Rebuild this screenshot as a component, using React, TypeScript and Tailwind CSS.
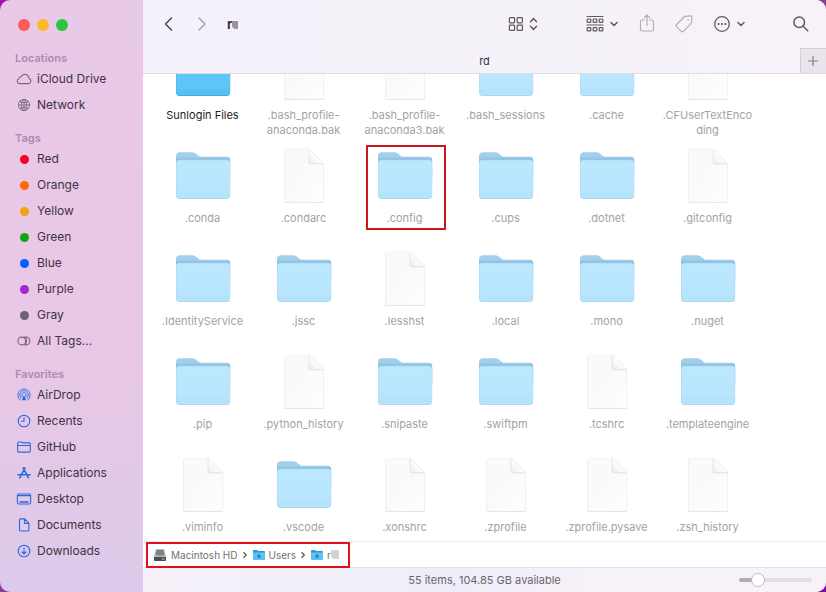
import { useId, type ReactNode } from "react";

type EntryKind = "folder" | "file";

interface Entry {
  name: string;
  kind: EntryKind;
  visible?: boolean;
  marked?: boolean;
}

const entries: Entry[] = [
  { name: "Sunlogin Files", kind: "folder", visible: true },
  { name: ".bash_profile-anaconda.bak", kind: "file" },
  { name: ".bash_profile-anaconda3.bak", kind: "file" },
  { name: ".bash_sessions", kind: "folder" },
  { name: ".cache", kind: "folder" },
  { name: ".CFUserTextEncoding", kind: "file" },
  { name: ".conda", kind: "folder" },
  { name: ".condarc", kind: "file" },
  { name: ".config", kind: "folder", marked: true },
  { name: ".cups", kind: "folder" },
  { name: ".dotnet", kind: "folder" },
  { name: ".gitconfig", kind: "file" },
  { name: ".IdentityService", kind: "folder" },
  { name: ".jssc", kind: "folder" },
  { name: ".lesshst", kind: "file" },
  { name: ".local", kind: "folder" },
  { name: ".mono", kind: "folder" },
  { name: ".nuget", kind: "folder" },
  { name: ".pip", kind: "folder" },
  { name: ".python_history", kind: "file" },
  { name: ".snipaste", kind: "folder" },
  { name: ".swiftpm", kind: "folder" },
  { name: ".tcshrc", kind: "file" },
  { name: ".templateengine", kind: "folder" },
  { name: ".viminfo", kind: "file" },
  { name: ".vscode", kind: "folder" },
  { name: ".xonshrc", kind: "file" },
  { name: ".zprofile", kind: "file" },
  { name: ".zprofile.pysave", kind: "file" },
  { name: ".zsh_history", kind: "file" },
];

function FolderIcon({ visible }: { visible?: boolean }) {
  const id = useId();
  const back = visible ? "#3f9fd8" : "#a2cfeb";
  const shade = visible ? "#358fc6" : "#8cbfe0";
  const top = visible ? "#66cafa" : "#bce8ff";
  const bottom = visible ? "#5bc3f6" : "#b7e5fd";
  const edge = visible ? "#3c9fd0" : "#a5d1e9";
  return (
    <svg viewBox="0 0 56 56" className="size-14" aria-hidden="true">
      <defs>
        <linearGradient id={id} x1="0" y1="0" x2="0" y2="1">
          <stop offset="0" stopColor={top} />
          <stop offset="1" stopColor={bottom} />
        </linearGradient>
        <linearGradient id={`${id}b`} x1="0" y1="4.500" x2="0" y2="12" gradientUnits="userSpaceOnUse">
          <stop offset=".5" stopColor={back} />
          <stop offset="1" stopColor={shade} />
        </linearGradient>
      </defs>
      <path d="M1 8.500c0-3 1.300-4.300 4.300-4.300h11.500c2 0 3.200.6 4.700 1.900l1.600 1.400c1.100.9 2 1.300 3.600 1.300H52c2.200 0 3.200 1.100 3.200 3.200V30H1z" fill={`url(#${id}b)`} />
      <path d="M1 15.500c0-2.600 1-3.700 3.500-3.700h47.200c2.500 0 3.500 1.100 3.500 3.700v31.500c0 2.900-1.100 4-4 4H5c-2.900 0-4-1.100-4-4z" fill={edge} />
      <path d="M1.300 15.700c0-2.400 1-3.400 3.200-3.400h47.200c2.200 0 3.200 1 3.200 3.400V46.600c0 2.600-1 3.600-3.600 3.600H4.900c-2.600 0-3.600-1-3.600-3.600z" fill={`url(#${id})`} />
      <path d="M1.500 45.500h53.200M1.700 47.500h52.800" stroke={edge} strokeWidth=".5" opacity=".45" />
    </svg>
  );
}

function FileIcon() {
  const id = useId();
  return (
    <svg viewBox="0 0 56 56" className="size-14" aria-hidden="true">
      <defs>
        <linearGradient id={id} x1="0" y1="0" x2="1" y2="1">
          <stop offset="0" stopColor="#fafafa" />
          <stop offset=".45" stopColor="#fafafa" />
          <stop offset="1" stopColor="#fefefe" />
        </linearGradient>
        <linearGradient id={`${id}f`} x1="0" y1="1" x2=".5" y2=".5">
          <stop offset="0" stopColor="#ececec" />
          <stop offset="1" stopColor="#fff" />
        </linearGradient>
      </defs>
      <path d="M9 2h24.400L48 16.500v37c0 1-.6 1.600-1.700 1.600H9.800c-1 0-1.600-.6-1.600-1.600V3z" fill="#e3e3e3" />
      <path d="M9.800 1h23.400L47.700 15.500v37.100c0 1-.5 1.500-1.500 1.500H10c-1 0-1.500-.5-1.500-1.500V2.500c0-1 .4-1.500 1.300-1.500z" fill={`url(#${id})`} stroke="#eeeeee" strokeWidth=".5" />
      <path d="M32.600 1.500V14.500c0 1.400.6 2 2 2h12.600z" fill="#ececec" />
      <path d="M33.200 1v12.500c0 1.400.6 2 2 2h12.500z" fill={`url(#${id}f)`} stroke="#dcdcdc" strokeWidth=".5" />
    </svg>
  );
}

function Glyph({ children, className = "" }: { children: ReactNode; className?: string }) {
  return (
    <svg
      viewBox="0 0 16 16"
      className={`size-4 shrink-0 ${className}`}
      fill="none"
      stroke="currentColor"
      strokeWidth="1.1"
      strokeLinecap="round"
      strokeLinejoin="round"
      aria-hidden="true"
    >
      {children}
    </svg>
  );
}

const gray = "text-[#7a677f]";
const blue = "text-[#2a68da]";

function Dot({ color }: { color: string }) {
  return (
    <span className="flex size-4 shrink-0 items-center justify-center">
      <span className={`size-[9px] rounded-full ${color}`} />
    </span>
  );
}

interface SideItem {
  label: string;
  icon: ReactNode;
}

const locations: SideItem[] = [
  {
    label: "iCloud Drive",
    icon: (
      <Glyph className={gray}>
        <path d="M3.600 12.600h8.800a2.600 2.600 0 0 0 .6-5.100A4.100 4.100 0 0 0 5.200 5.800 2.300 2.300 0 0 0 2.700 8 2.400 2.400 0 0 0 3.600 12.600z" />
      </Glyph>
    ),
  },
  {
    label: "Network",
    icon: (
      <Glyph className={gray}>
        <g strokeWidth=".9">
          <circle cx="8" cy="8" r="5.600" />
          <ellipse cx="8" cy="8" rx="2.600" ry="5.600" />
          <path d="M8 2.400v11.200M2.400 8h11.200M3.700 4.500c2.500 1.600 6.100 1.600 8.600 0M3.700 11.500c2.500-1.600 6.100-1.600 8.600 0" />
        </g>
      </Glyph>
    ),
  },
];

const tags: SideItem[] = [
  { label: "Red", icon: <Dot color="bg-[#fb0020]" /> },
  { label: "Orange", icon: <Dot color="bg-[#f96b00]" /> },
  { label: "Yellow", icon: <Dot color="bg-[#f0a30a]" /> },
  { label: "Green", icon: <Dot color="bg-[#0aa70f]" /> },
  { label: "Blue", icon: <Dot color="bg-[#0560fb]" /> },
  { label: "Purple", icon: <Dot color="bg-[#a528cf]" /> },
  { label: "Gray", icon: <Dot color="bg-[#726078]" /> },
  {
    label: "All Tags...",
    icon: (
      <Glyph className={gray}>
        <circle cx="5.800" cy="8" r="3.900" />
        <path d="M8.600 4.100h1.300a3.900 3.900 0 0 1 0 7.800H8.600c2.700-2 2.700-5.800 0-7.800" />
      </Glyph>
    ),
  },
];

const favorites: SideItem[] = [
  {
    label: "AirDrop",
    icon: (
      <Glyph className={blue}>
        <path d="M4 12.900a6.200 6.200 0 1 1 8 0M5 11.200a4.300 4.300 0 1 1 6 0M6.200 9.700a2.400 2.400 0 1 1 3.600 0" strokeWidth=".9" />
        <path d="M8 7.800l-2.200 5.400h4.400z" fill="currentColor" stroke="none" />
      </Glyph>
    ),
  },
  {
    label: "Recents",
    icon: (
      <Glyph className={blue}>
        <circle cx="8" cy="8" r="5.800" />
        <path d="M8 4.600V8.300H5.300" />
      </Glyph>
    ),
  },
  {
    label: "GitHub",
    icon: (
      <Glyph className={blue}>
        <path d="M1.700 12V4.200c0-.8.400-1.200 1.200-1.200h2.500c.8 0 1.100.9 1.900.9h5.800c.8 0 1.200.4 1.200 1.200V12c0 .7-.4 1.100-1.200 1.100H2.900c-.8 0-1.200-.4-1.200-1.100zM1.700 6.500h12.600" />
      </Glyph>
    ),
  },
  {
    label: "Applications",
    icon: (
      <Glyph className={blue}>
        <path d="M7.200 2.900L12.300 12.700M8.900 2.900L6 8.600M4.700 11.100L3.800 12.800M2 9.800h7.400M12 9.800h2" strokeWidth="1.600" />
      </Glyph>
    ),
  },
  {
    label: "Desktop",
    icon: (
      <Glyph className={blue}>
        <rect x="1.400" y="3" width="13.200" height="10" rx="1.200" />
        <path d="M1.400 4.600h13.200" />
        <path d="M4.200 11h7.600" strokeWidth="1.600" />
      </Glyph>
    ),
  },
  {
    label: "Documents",
    icon: (
      <Glyph className={blue}>
        <path d="M3.500 3c0-.7.400-1.100 1.100-1.100h4.100l4.200 4.300v6.700c0 .7-.4 1.100-1.100 1.100H4.600c-.7 0-1.100-.4-1.100-1.100zM8.500 2.100v4.300h4.200" />
      </Glyph>
    ),
  },
  {
    label: "Downloads",
    icon: (
      <Glyph className={blue}>
        <circle cx="8" cy="8" r="5.800" />
        <path d="M8 4.900v6M5.900 8.900L8 11l2.100-2.100" />
      </Glyph>
    ),
  },
];

function SideSection({ title, items }: { title: string; items: SideItem[] }) {
  return (
    <section>
      <h2 className="h-4 pl-[15px] text-[11px] leading-4 font-semibold text-[#a98bae]">{title}</h2>
      <ul>
        {items.map((item) => (
          <li key={item.label}>
            <a href="#" className="flex h-[26px] items-center gap-[5px] pl-4 text-[12px] leading-4 text-[#3f3244]">
              {item.icon}
              {item.label}
            </a>
          </li>
        ))}
      </ul>
    </section>
  );
}

function Sidebar() {
  return (
    <nav
      aria-label="Sidebar"
      className="flex w-[143px] shrink-0 flex-col bg-linear-to-b from-[#e9c9e8] via-[#e9c7e6] via-60% to-[#dccaea]"
    >
      <div className="flex h-[50px] items-center gap-[7px] pl-[18px]">
        <button aria-label="Close" className="size-3 rounded-full bg-[#fc5b57]" />
        <button aria-label="Minimize" className="size-3 rounded-full bg-[#fcb827]" />
        <button aria-label="Zoom" className="size-3 rounded-full bg-[#2bc540]" />
      </div>
      <div className="flex flex-col gap-3">
        <SideSection title="Locations" items={locations} />
        <SideSection title="Tags" items={tags} />
        <SideSection title="Favorites" items={favorites} />
      </div>
    </nav>
  );
}

function Chevron() {
  return (
    <svg viewBox="0 0 10 10" className="size-[10px]" fill="none" stroke="currentColor" strokeWidth="1.500" strokeLinecap="round" strokeLinejoin="round" aria-hidden="true">
      <path d="M2 3.500L5 6.500L8 3.500" />
    </svg>
  );
}

function Toolbar() {
  return (
    <div className="flex h-12 items-center pr-4 pl-[18px] text-[#5e5862]">
      <div className="flex items-center gap-[17px]">
        <button aria-label="Back" className="text-[#4b464e]">
          <svg viewBox="0 0 16 18" className="h-[18px] w-4" fill="none" stroke="currentColor" strokeWidth="1.500" strokeLinecap="round" strokeLinejoin="round" aria-hidden="true">
            <path d="M10.500 3L4.500 9l6 6" />
          </svg>
        </button>
        <button aria-label="Forward" className="text-[#a9a4ad]">
          <svg viewBox="0 0 16 18" className="h-[18px] w-4" fill="none" stroke="currentColor" strokeWidth="1.500" strokeLinecap="round" strokeLinejoin="round" aria-hidden="true">
            <path d="M5 3l6 6-6 6" />
          </svg>
        </button>
        <h1 className="flex items-end text-[13px] leading-4 font-bold text-[#39343c]">
          r<span className="mb-[3px] h-2 w-[6px] rounded-bl-[4px] bg-[#98949b]" />
        </h1>
      </div>
      <div className="ml-auto flex items-center gap-[46px]">
        <button aria-label="Icon view" className="flex items-center gap-1">
          <svg viewBox="0 0 16 16" className="size-4" fill="none" stroke="currentColor" strokeWidth="1.200" aria-hidden="true">
            <rect x="1.400" y="1.600" width="5.200" height="5.200" rx=".7" />
            <rect x="9.200" y="1.600" width="5.200" height="5.200" rx=".7" />
            <rect x="1.400" y="9.200" width="5.200" height="5.200" rx=".7" />
            <rect x="9.200" y="9.200" width="5.200" height="5.200" rx=".7" />
          </svg>
          <svg viewBox="0 0 12 16" className="h-4 w-3" fill="none" stroke="currentColor" strokeWidth="1.500" strokeLinecap="round" strokeLinejoin="round" aria-hidden="true">
            <path d="M2.500 5.700l3-3.200 3 3.200M2.500 10.300l3 3.200 3-3.200" />
          </svg>
        </button>
        <div className="flex items-center gap-5">
          <button aria-label="Group items" className="flex items-center gap-[5px]">
            <svg viewBox="0 0 18 18" className="size-[18px]" fill="none" stroke="currentColor" strokeWidth="1.200" aria-hidden="true">
              <path d="M.6 1.500h16.800M.6 10h16.800" />
              <rect x="1.200" y="4" width="3.600" height="3.300" rx=".5" />
              <rect x="7.200" y="4" width="3.600" height="3.300" rx=".5" />
              <rect x="13.200" y="4" width="3.600" height="3.300" rx=".5" />
              <rect x="1.200" y="12.600" width="3.600" height="3.300" rx=".5" />
              <rect x="7.200" y="12.600" width="3.600" height="3.300" rx=".5" />
              <rect x="13.200" y="12.600" width="3.600" height="3.300" rx=".5" />
            </svg>
            <Chevron />
          </button>
          <button aria-label="Share" className="text-[#b3adb7]">
            <svg viewBox="0 0 16 20" className="h-5 w-4" fill="none" stroke="currentColor" strokeWidth="1.200" strokeLinecap="round" strokeLinejoin="round" aria-hidden="true">
              <path d="M5.500 6H3C2 6 1.500 6.500 1.500 7.500v8C1.500 16.500 2 17 3 17h10c1 0 1.500-.5 1.500-1.500v-8C14.500 6.500 14 6 13 6h-2.500M8 11.500V1.200M5.200 3.800L8 1l2.800 2.800" />
            </svg>
          </button>
          <button aria-label="Edit tags" className="text-[#b3adb7]">
            <svg viewBox="0 0 18 18" className="size-[18px]" fill="none" stroke="currentColor" strokeWidth="1.200" strokeLinejoin="round" aria-hidden="true">
              <path d="M10.300 1.400l4.900-.5c1-.1 1.800.5 1.700 1.600l-.3 4.500c0 .6-.2 1-.6 1.400l-7.500 7.900c-.8.700-1.500.7-2.200 0L1.600 11.600c-.7-.7-.7-1.400 0-2.100l7.500-7.500c.4-.4.700-.5 1.200-.6z" />
              <circle cx="13.200" cy="4.800" r=".9" fill="currentColor" stroke="none" />
            </svg>
          </button>
          <button aria-label="More actions" className="flex items-center gap-[5px]">
            <svg viewBox="0 0 18 18" className="size-[18px]" fill="none" stroke="currentColor" strokeWidth="1.300" aria-hidden="true">
              <circle cx="9" cy="9" r="7.300" />
              <g fill="currentColor" stroke="none">
                <circle cx="5.600" cy="9" r="1.100" />
                <circle cx="9" cy="9" r="1.100" />
                <circle cx="12.400" cy="9" r="1.100" />
              </g>
            </svg>
            <Chevron />
          </button>
        </div>
        <button aria-label="Search">
          <svg viewBox="0 0 18 18" className="size-[18px]" fill="none" stroke="currentColor" strokeWidth="1.500" strokeLinecap="round" aria-hidden="true">
            <circle cx="7.200" cy="7.200" r="5.300" />
            <path d="M11.200 11.200l4.500 4.500" />
          </svg>
        </button>
      </div>
    </div>
  );
}

function TabBar() {
  return (
    <div className="flex h-[26px] border-b border-[#dfdbe3]">
      <button className="flex-1 pl-[26px] text-[11px] leading-4 text-[#39343c]">rd</button>
      <button aria-label="New tab" className="flex w-[26px] items-center justify-center border-t border-l border-[#d3cdd7] bg-[#e9e4ec] pr-px text-[#827c86]">
        <svg viewBox="0 0 12 12" className="size-3" fill="none" stroke="currentColor" strokeWidth="1.200" aria-hidden="true">
          <path d="M6 1v10M1 6h10" />
        </svg>
      </button>
    </div>
  );
}

function EntryCell({ entry }: { entry: Entry }) {
  return (
    <li className="relative flex flex-col items-center gap-[7px]">
      {entry.kind === "folder" ? <FolderIcon visible={entry.visible} /> : <FileIcon />}
      <span
        className={`w-[92px] text-center text-[11px] leading-[15px] wrap-anywhere ${entry.visible ? "text-[#1d1d1d]" : "text-[#a3a3a3]"}`}
      >
        {entry.name}
      </span>
      {entry.marked && <span className="absolute -top-[3px] left-3 h-[85px] w-20 border-2 border-[#cb161c]" />}
    </li>
  );
}

function SmallFolder() {
  return (
    <svg viewBox="0 0 14 12" className="h-3 w-[14px]" aria-hidden="true">
      <path d="M1 2c0-.7.400-1 1-1h3l1.300 1H12c.6 0 1 .4 1 1v2H1z" fill="#3196cf" />
      <path d="M1 3.400h12V10c0 .7-.4 1-1 1H2c-.6 0-1-.3-1-1z" fill="#5cc1f3" />
      <path d="M7 5L4.800 7h.7v2h3V7h.7z" fill="#2c86b8" />
    </svg>
  );
}

function DriveIcon() {
  return (
    <svg viewBox="0 0 14 14" className="size-[14px]" aria-hidden="true">
      <path d="M2.800 1h8.400L13 9H1z" fill="#b3b8bb" />
      <path d="M3.600 2h6.800l1 4.500c-2.200 1.500-6.600 1.500-8.800 0z" fill="#7b8388" />
      <path d="M1 9h12v2.800c0 .8-.4 1.200-1.200 1.200H2.200C1.400 13 1 12.600 1 11.800z" fill="#4a4f52" />
      <path d="M9 11h2.500" stroke="#b9dcb6" strokeWidth="1" />
    </svg>
  );
}

function Separator() {
  return (
    <svg viewBox="0 0 6 8" className="h-2 w-[6px] text-[#5d5d5d]" fill="none" stroke="currentColor" strokeWidth="1.300" aria-hidden="true">
      <path d="M1.500 1.200L4.300 4 1.500 6.800" />
    </svg>
  );
}

function PathBar() {
  return (
    <div className="relative flex h-[26px] items-center border-t border-[#ececec] bg-white pl-[10px] text-[10px] leading-4 text-[#717171]">
      <nav aria-label="Path" className="flex items-center gap-1">
        <a href="#" className="flex items-center gap-1">
          <DriveIcon />
          Macintosh HD
        </a>
        <Separator />
        <a href="#" className="flex items-center gap-[3px]">
          <SmallFolder />
          Users
        </a>
        <Separator />
        <a href="#" className="flex items-center gap-[3px]">
          <SmallFolder />
          <span className="flex items-center">
            r<span className="h-[9px] w-2 rounded-bl-[4px] bg-[#d3d3d3]" />
          </span>
        </a>
      </nav>
      <span className="absolute top-0 left-[3px] h-[26px] w-[204px] border-2 border-[#e0101c]" />
    </div>
  );
}

function StatusBar() {
  return (
    <footer className="grid h-[25px] grid-cols-[1fr_auto_1fr] items-center border-t border-[#e2dee5] bg-linear-to-r from-[#f6f1f9] via-[#eeedf9] via-45% to-[#f7f1f8] to-65% px-[14px]">
      <p className="col-start-2 text-[11px] leading-4 text-[#6b666e]">55 items, 104.85 GB available</p>
      <input
        type="range"
        aria-label="Icon size"
        defaultValue={20}
        className="h-[14px] w-[73px] appearance-none justify-self-end bg-transparent [&::-webkit-slider-runnable-track]:h-1 [&::-webkit-slider-runnable-track]:rounded-full [&::-webkit-slider-runnable-track]:bg-linear-to-r [&::-webkit-slider-runnable-track]:from-[#b3acb6] [&::-webkit-slider-runnable-track]:from-25% [&::-webkit-slider-runnable-track]:to-[#e2dde5] [&::-webkit-slider-runnable-track]:to-25% [&::-webkit-slider-thumb]:-mt-[5px] [&::-webkit-slider-thumb]:size-[14px] [&::-webkit-slider-thumb]:appearance-none [&::-webkit-slider-thumb]:rounded-full [&::-webkit-slider-thumb]:border [&::-webkit-slider-thumb]:border-[#bfb9c2] [&::-webkit-slider-thumb]:bg-white"
      />
    </footer>
  );
}

export default function App() {
  return (
    <div className="h-screen bg-linear-to-br from-[#a3149c] via-[#8a3c98] to-[#7a0aa8] font-['Inter','Liberation_Sans',sans-serif]">
      <div className="flex h-full overflow-hidden rounded-[10px]">
        <Sidebar />
        <div className="flex min-w-0 flex-1 flex-col bg-white">
          <header className="bg-linear-to-r from-[#f4f1fa] to-[#f7f2f9]">
            <Toolbar />
            <TabBar />
          </header>
          <main className="min-h-0 flex-1 overflow-hidden">
            <ul className="-mt-[29px] grid auto-rows-[103px] grid-cols-[repeat(auto-fill,101px)] pl-[9px]">
              {entries.map((entry) => (
                <EntryCell key={entry.name} entry={entry} />
              ))}
            </ul>
          </main>
          <PathBar />
          <StatusBar />
        </div>
      </div>
    </div>
  );
}
